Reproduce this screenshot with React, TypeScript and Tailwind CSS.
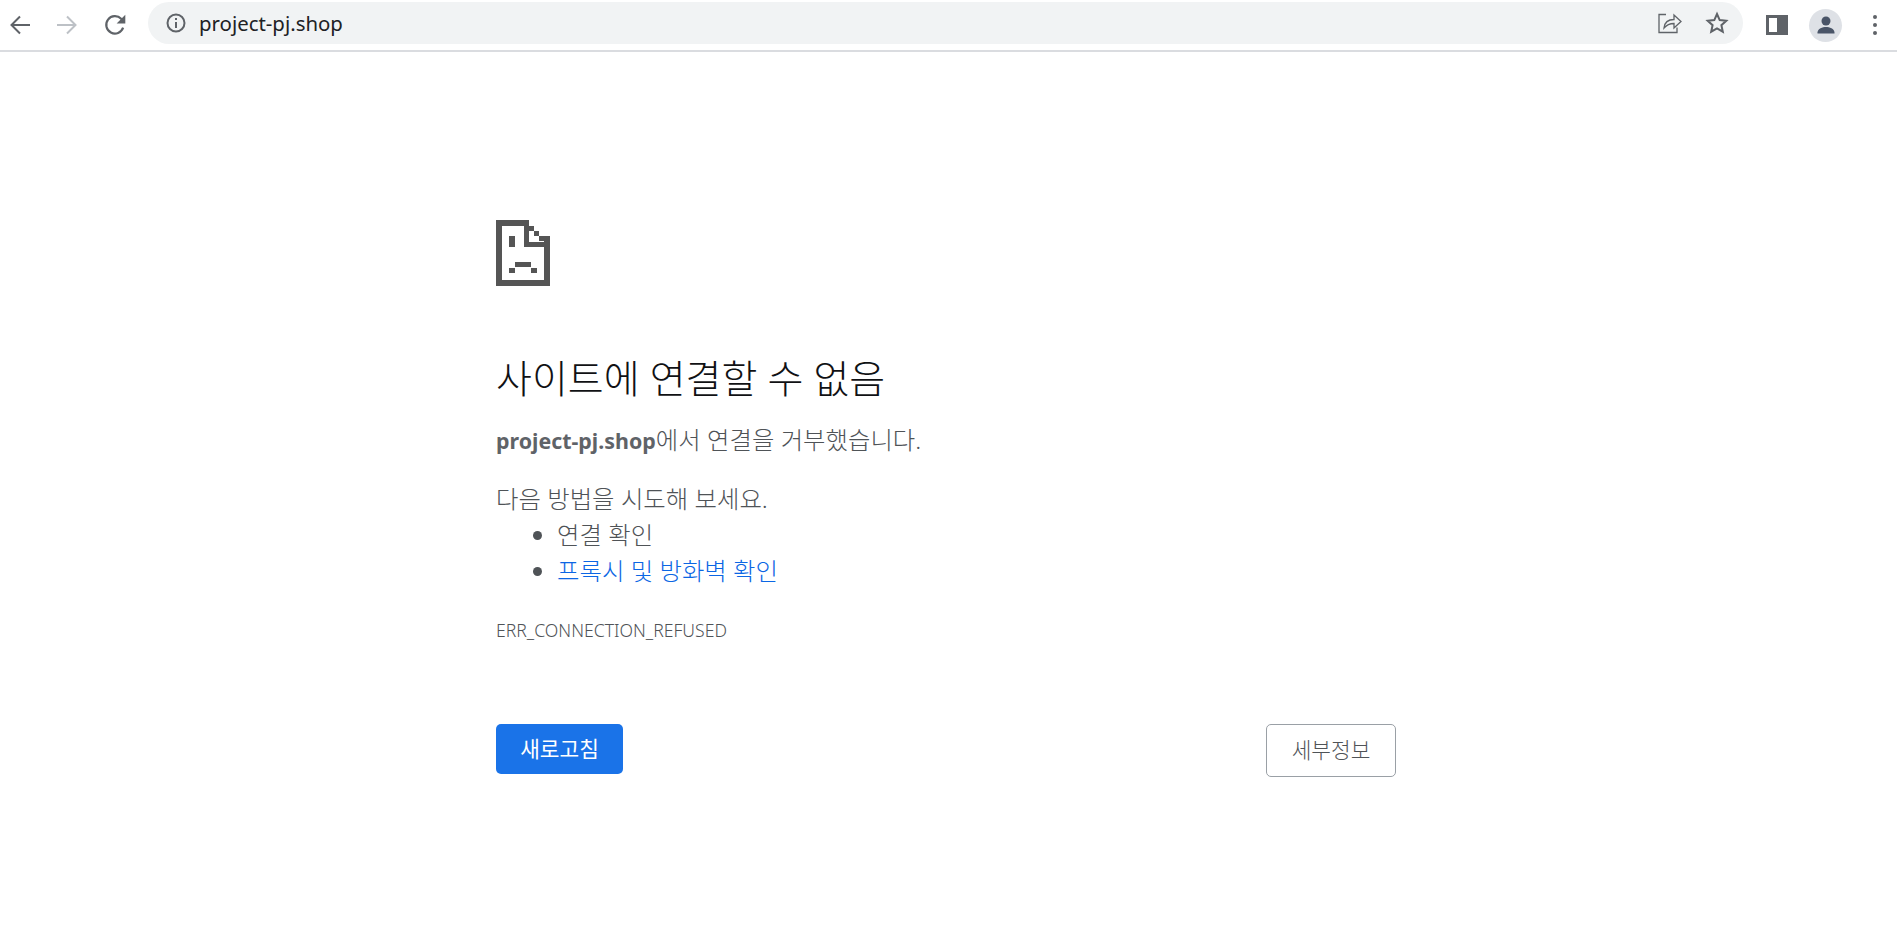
import React from 'react';

function BrowserBar() {
  return (
    <div className="flex h-[52px] shrink-0 items-start border-b-2 border-[#dadce0] bg-white">
      <div className="flex h-[50px] w-[148px] shrink-0 items-center">
        <svg className="ml-[8px] h-[24px] w-[24px]" viewBox="0 0 24 24" fill="none" stroke="#5f6368" strokeWidth="2">
          <path d="M22 12H4M12 3.500 3.500 12l8.500 8.500" />
        </svg>
        <svg className="ml-[23px] h-[24px] w-[24px]" viewBox="0 0 24 24" fill="none" stroke="#bdc1c6" strokeWidth="2">
          <path d="M2 12h18M12 3.500 20.500 12 12 20.500" />
        </svg>
        <svg className="ml-[23px] h-[26px] w-[26px]" viewBox="0 0 24 24" fill="none">
          <path d="M19.500 14.500A8 8 0 1 1 17.700 6.300L20 8.500" stroke="#5f6368" strokeWidth="2" />
          <path d="M21.500 2.500v8h-8z" fill="#5f6368" />
        </svg>
      </div>
      <div className="mt-[2px] flex h-[42px] w-[1595px] items-center rounded-full bg-[#f1f3f4]">
        <svg className="ml-[18px] h-[20px] w-[20px]" viewBox="0 0 20 20" fill="none" stroke="#5f6368" strokeWidth="2">
          <circle cx="10" cy="10" r="8.500" />
          <path d="M10 9v6M10 5v2" />
        </svg>
        <span className="ml-[13px] font-['Noto_Sans',sans-serif] text-[20.4px] text-[#202124]">project-pj.shop</span>
        <div className="ml-auto flex items-center">
          <svg className="h-[24px] w-[26px]" viewBox="0 0 26 24" fill="none" stroke="#5f6368" strokeWidth="1.300">
            <path d="M9 3.500H2v18h18v-5" />
            <path d="M7 17c.5-5 4-8.500 10-8.500V4l7 6.500-7 6.500v-4.500c-4.500 0-7.500 1.500-10 4.500z" />
          </svg>
          <svg className="ml-[22px] mr-[14px] h-[24px] w-[24px]" viewBox="0 0 24 24" fill="none" stroke="#5f6368" strokeWidth="2">
            <path d="m12 3 2.700 6.100 6.600.7-4.900 4.400 1.400 6.500L12 17.400l-5.800 3.300 1.400-6.500-4.900-4.400 6.600-.7z" />
          </svg>
        </div>
      </div>
      <div className="flex h-[50px] flex-1 items-center">
        <div className="ml-[23px] flex h-[20px] w-[22px] border-[3px] border-[#5f6368]">
          <div className="flex-1 bg-white" />
          <div className="w-[8px] bg-[#5f6368]" />
        </div>
        <div className="ml-[21px] flex h-[33px] w-[33px] items-center justify-center rounded-full bg-[#dee1e6]">
          <svg className="h-[26px] w-[26px]" viewBox="0 0 26 26" fill="#4a5568">
            <circle cx="13" cy="9" r="4.500" />
            <path d="M4.500 20.500c0-3.800 5.200-5.500 8.500-5.500s8.500 1.700 8.500 5.500v1h-17z" />
          </svg>
        </div>
        <div className="ml-[31px] flex flex-col gap-[4px]">
          <div className="h-[4px] w-[4px] rounded-full bg-[#5f6368]" />
          <div className="h-[4px] w-[4px] rounded-full bg-[#5f6368]" />
          <div className="h-[4px] w-[4px] rounded-full bg-[#5f6368]" />
        </div>
      </div>
    </div>
  );
}

function SadPage() {
  return (
    <svg className="block h-[66px] w-[54px]" viewBox="0 0 54 66" fill="#555555" shapeRendering="crispEdges">
      <rect x="0" y="0" width="6" height="66" />
      <rect x="0" y="0" width="33" height="6" />
      <rect x="0" y="60" width="54" height="6" />
      <rect x="48" y="16" width="6" height="50" />
      <rect x="28" y="0" width="5" height="27" />
      <rect x="28" y="22" width="26" height="5" />
      <rect x="33" y="6" width="5" height="5" />
      <rect x="38" y="11" width="5" height="5" />
      <rect x="43" y="16" width="5" height="5" />
      <rect x="13" y="16" width="6" height="11" />
      <rect x="19" y="42" width="16" height="5" />
      <rect x="13" y="48" width="6" height="5" />
      <rect x="35" y="48" width="6" height="5" />
    </svg>
  );
}

export default function App() {
  return (
    <div className="flex h-[940px] w-full flex-col overflow-hidden bg-white font-['Noto_Sans','Noto_Sans_CJK_KR',sans-serif] text-[#4f5357]">
      <BrowserBar />
      <main className="ml-[496px] w-[900px] self-start pt-[168px]">
        <SadPage />
        <h1 className="mt-[67px] text-[39px] leading-[50px] font-light text-[#101114]">사이트에 연결할 수 없음</h1>
        <p className="mt-[19px] h-[36px] text-[24.4px] leading-[36px] font-light">
          <strong className="text-[21.4px] font-bold text-[#5f6368]">project-pj.shop</strong>에서 연결을 거부했습니다.
        </p>
        <p className="mt-[23px] h-[36px] text-[24.4px] leading-[36px] font-light">다음 방법을 시도해 보세요.</p>
        <ul className="ml-[37px] list-disc pl-[24px] text-[24.4px] leading-[36px] font-light">
          <li>연결 확인</li>
          <li>
            <span className="text-[#0b66e4]">프록시 및 방화벽 확인</span>
          </li>
        </ul>
        <div className="mt-[31px] h-[20px] text-[17.6px] leading-[20px] font-light">ERR_CONNECTION_REFUSED</div>
        <div className="mt-[84px] flex items-start justify-between">
          <button className="h-[50px] w-[127px] rounded-[5px] bg-[#1a73e8] text-[21.4px] text-white">새로고침</button>
          <button className="h-[53px] w-[130px] rounded-[5px] border border-[#9aa0a6] bg-white text-[21.4px] font-light text-[#4f5357]">세부정보</button>
        </div>
      </main>
    </div>
  );
}
